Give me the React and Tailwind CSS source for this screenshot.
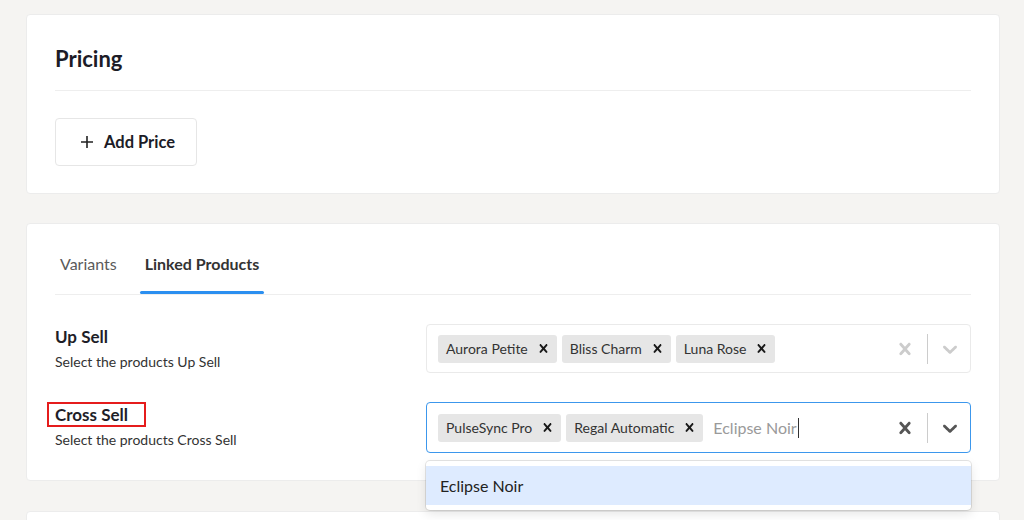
import React from "react";

const Cross = ({ size = 20, className = "" }) => (
  <svg viewBox="0 0 20 20" width={size} height={size} className={className} fill="currentColor" aria-hidden="true">
    <path d="M14.348 14.849c-0.469 0.469-1.229 0.469-1.697 0l-2.651-3.030-2.651 3.029c-0.469 0.469-1.229 0.469-1.697 0-0.469-0.469-0.469-1.229 0-1.697l2.758-3.15-2.759-3.152c-0.469-0.469-0.469-1.228 0-1.697s1.228-0.469 1.697 0l2.652 3.031 2.651-3.031c0.469-0.469 1.228-0.469 1.697 0s0.469 1.229 0 1.697l-2.758 3.152 2.758 3.15c0.469 0.469 0.469 1.229 0 1.698z" />
  </svg>
);

const Chevron = ({ size = 20, className = "" }) => (
  <svg viewBox="0 0 20 20" width={size} height={size} className={className} fill="currentColor" aria-hidden="true">
    <path d="M4.516 7.548c0.436-0.446 1.043-0.481 1.576 0l3.908 3.747 3.908-3.747c0.533-0.481 1.141-0.446 1.574 0 0.436 0.445 0.408 1.197 0 1.615-0.406 0.418-4.695 4.502-4.695 4.502-0.217 0.223-0.502 0.335-0.787 0.335s-0.57-0.112-0.789-0.335c0 0-4.287-4.084-4.695-4.502s-0.436-1.17 0-1.615z" />
  </svg>
);

function Chip({ label }) {
  return (
    <div className="flex h-[28px] shrink-0 items-center gap-[7px] rounded-[3px] bg-[#e6e6e6] pl-2 pr-[5px]">
      <span className="text-[14px] leading-none text-[#333]">{label}</span>
      <Cross size={17} className="text-[#1a1a1a]" />
    </div>
  );
}

function Field({ title, desc, boxed }) {
  return (
    <div className="flex-1 pt-px">
      <div className="relative inline-block">
        <div className="text-[17px] font-bold leading-[24px] text-[#1e1e28]">{title}</div>
        {boxed && (
          <div className="absolute left-[-8px] top-[-1px] h-[25px] w-[99px] border-2 border-[#e51c1c]" />
        )}
      </div>
      <div className="mt-[3px] text-[14px] leading-[20px] text-[#333]">{desc}</div>
    </div>
  );
}

export default function App() {
  return (
    <div className="h-[520px] overflow-hidden bg-[#f5f4f2] pl-[26px] pr-[24px] pt-[14px] font-['Lato','Noto_Sans',sans-serif]">
      {/* Pricing card */}
      <div className="rounded-[4px] border border-[#ececec] bg-white px-[28px] pb-[27px] pt-[29px]">
        <h2 className="text-[22px] font-bold leading-[30px] text-[#1c1c27]">Pricing</h2>
        <div className="mt-[16px] h-px bg-[#eeeeee]" />
        <button className="mt-[27px] flex h-[48px] w-[142px] items-center gap-[10px] rounded-[4px] border border-[#e6e6e6] bg-white pl-[24px] text-[16.5px] font-bold text-[#1c1c27]">
          <svg width="14" height="14" viewBox="0 0 14 14" aria-hidden="true">
            <path d="M7 1v12M1 7h12" stroke="#222" strokeWidth="1.6" />
          </svg>
          Add Price
        </button>
      </div>

      {/* Linked products card */}
      <div className="mt-[29px] rounded-[4px] border border-[#ececec] bg-white px-[28px] pb-[27px]">
        <div className="flex gap-[18px] border-b border-[#eeeeee] pt-[28px]">
          <div className="flex flex-col">
            <span className="px-[5px] text-[16px] leading-[24px] text-[#5a5a5a]">Variants</span>
            <div className="mt-[15px] h-[3px]" />
          </div>
          <div className="flex flex-col">
            <span className="px-[5px] text-[16px] font-bold leading-[24px] text-[#333]">Linked Products</span>
            <div className="mb-[-1px] mt-[15px] h-[3px] rounded-full bg-[#2b8ff0]" />
          </div>
        </div>

        <div className="mt-[29px] flex">
          <Field title="Up Sell" desc="Select the products Up Sell" />
          <div className="flex h-[49px] w-[545px] items-center rounded-[4px] border border-[#eaeaea] bg-white pl-[11px] pr-[8px]">
            <div className="flex flex-1 items-center gap-[5px]">
              <Chip label="Aurora Petite" />
              <Chip label="Bliss Charm" />
              <Chip label="Luna Rose" />
            </div>
            <Cross size={24} className="text-[#cccccc]" />
            <div className="mx-[10px] h-[30px] w-px bg-[#cccccc]" />
            <Chevron size={24} className="text-[#cccccc]" />
          </div>
        </div>

        <div className="mt-[29px] flex">
          <Field title="Cross Sell" desc="Select the products Cross Sell" boxed />
          <div className="relative w-[545px]">
            <div className="flex h-[51px] items-center rounded-[4px] border border-[#3c97ec] bg-white pl-[11px] pr-[8px]">
              <div className="flex flex-1 items-center gap-[5px]">
                <Chip label="PulseSync Pro" />
                <Chip label="Regal Automatic" />
                <div className="ml-[5px] flex items-center">
                  <span className="text-[16px] text-[#9a9a9a]">Eclipse Noir</span>
                  <span className="ml-px h-[20px] w-px bg-[#333]" />
                </div>
              </div>
              <Cross size={24} className="text-[#555555]" />
              <div className="mx-[10px] h-[30px] w-px bg-[#cccccc]" />
              <Chevron size={24} className="text-[#555555]" />
            </div>
            <div className="absolute left-0 top-full z-10 mt-[8px] w-full rounded-[4px] bg-white py-[5px] shadow-[0_0_0_1px_rgba(0,0,0,0.1),0_4px_11px_rgba(0,0,0,0.1)]">
              <div className="flex h-[39px] items-center bg-[#deebff] px-[14px] text-[16px] text-[#222]">Eclipse Noir</div>
            </div>
          </div>
        </div>
      </div>

      {/* Next card */}
      <div className="mt-[30px] h-[80px] rounded-[4px] border border-[#ececec] bg-white" />
    </div>
  );
}
